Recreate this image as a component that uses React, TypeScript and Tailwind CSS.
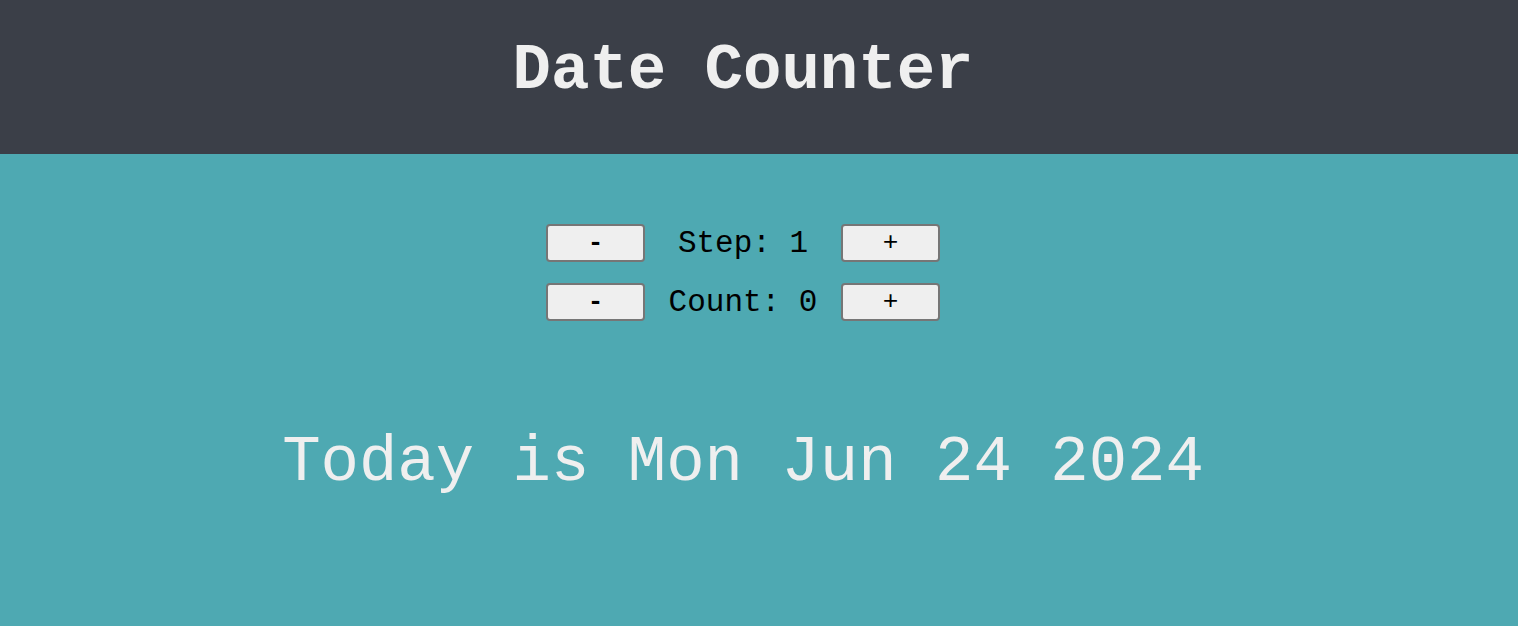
import { useState } from "react";

const mono = { fontFamily: '"Liberation Mono", "Courier New", monospace' };

const btn =
  "w-[99px] h-[38px] border-2 border-[#767676] rounded-[4px] bg-[#efefef] text-[26px] leading-none text-black flex items-center justify-center";

const App = () => {
  const [step, setStep] = useState(1);
  const [count, setCount] = useState(0);

  const date = new Date(2024, 5, 24);
  date.setDate(date.getDate() + count);

  return (
    <div className="min-h-screen flex flex-col bg-[#4ea9b2]" style={mono}>
      <header className="h-[154px] bg-[#3b3f48] flex items-center justify-center pr-8 pb-3">
        <h1 className="text-[64px] leading-none font-bold text-[#efefef]">Date Counter</h1>
      </header>

      <main className="flex flex-col items-center pr-8 pt-[70px]">
        <div className="flex flex-col gap-[21px]">
          <div className="flex items-center">
            <button className={`${btn} font-bold`} style={mono} onClick={() => setStep((s) => Math.max(1, s - 1))}>
              -
            </button>
            <span className="w-[196px] text-center text-[31px] leading-none text-black">Step: {step}</span>
            <button className={btn} style={mono} onClick={() => setStep((s) => s + 1)}>
              +
            </button>
          </div>
          <div className="flex items-center">
            <button className={`${btn} font-bold`} style={mono} onClick={() => setCount((c) => c - step)}>
              -
            </button>
            <span className="w-[196px] text-center text-[31px] leading-none text-black">Count: {count}</span>
            <button className={btn} style={mono} onClick={() => setCount((c) => c + step)}>
              +
            </button>
          </div>
        </div>

        <p className="mt-[110px] text-[64px] leading-none text-[#efefef]">Today is {date.toDateString()}</p>
      </main>
    </div>
  );
};

export default App;
